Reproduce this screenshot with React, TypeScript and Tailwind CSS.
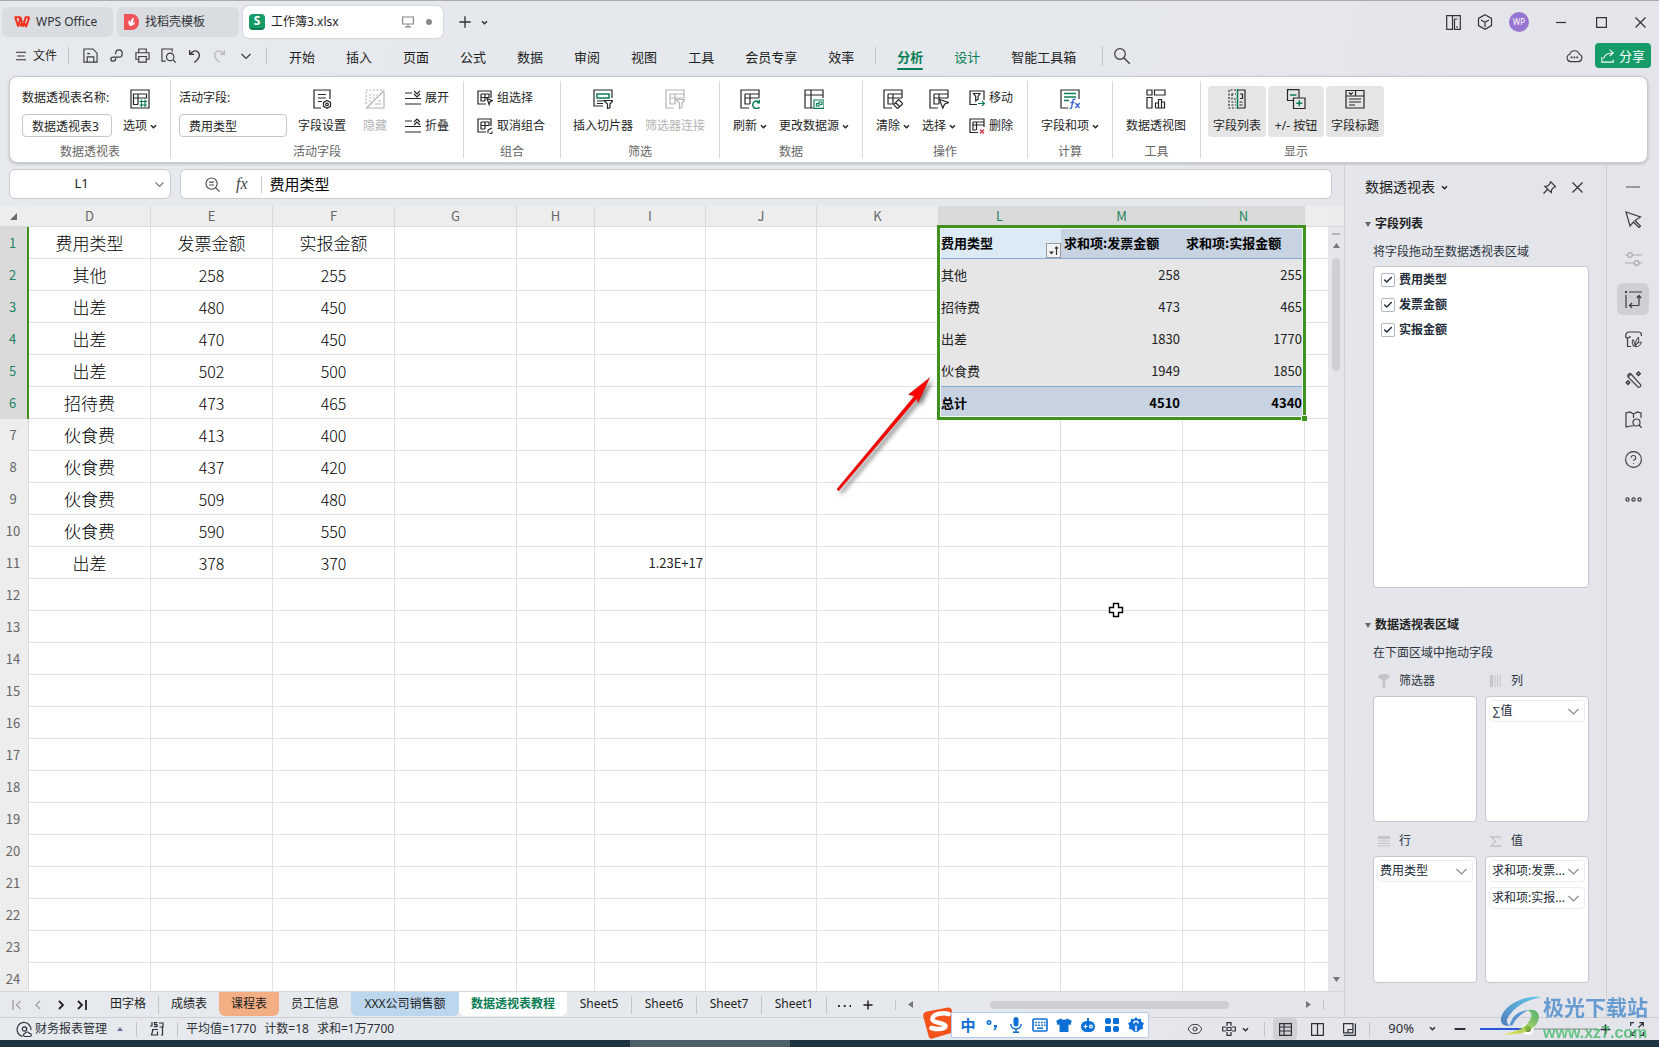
import React, { useState } from 'react';
import { Check, Plus, Minus, Eye, CircleHelp } from 'lucide-react';

type Kids = { children?: React.ReactNode };

function Svg({ size = 20, box = 20, className = '', children }: Kids & { size?: number; box?: number; className?: string }) {
  return (
    <svg width={size} height={size} viewBox={`0 0 ${box} ${box}`} fill="none" stroke="currentColor" strokeWidth="1.2" className={`shrink-0 ${className}`} aria-hidden="true">
      {children}
    </svg>
  );
}

function Caret({ className = '' }: { className?: string }) {
  return (
    <Svg size={7} box={7} className={className}>
      <path d="M1 2.2 3.5 4.7 6 2.2" strokeWidth="1.5" />
    </Svg>
  );
}

/* ---------- ribbon icons ---------- */
const G = '#0a7d55';
const tableFrame = <path d="M9 19H1V1h18v8M5 5h14M5 5v10h5M5 9h14M10 5v10" />;

const OptionsIcon = () => (
  <Svg>
    <path d="M1 1h18v18H1zM3.500 5h13v4h-13zM3.500 9v6.500H8M8 5v10.500" />
    <path stroke={G} d="M11.500 10.500v7.500M15 10.500v7.500M9.500 12.500h7.500M9.500 16H17" />
  </Svg>
);
const FieldSettingIcon = () => (
  <Svg>
    <path d="M9 19H2V1h16v9M6 5.500h8M6 9h8M6 12.500h4" />
    <path d="m15 11.500 3.500 1.900v3.900L15 19.300l-3.500-2v-3.900z" />
    <circle cx="15" cy="15.400" r="1.300" />
  </Svg>
);
const HideIcon = () => (
  <Svg>
    <path strokeDasharray="2 1.500" d="M1 15V1h18M4 6h8M4 9h6M4 12h3" />
    <path d="M19.500 1 1 19.500M1 19h18V3M10 15h6M13 12h3" />
  </Svg>
);
const ExpandIcon = () => (
  <Svg size={16} box={16}>
    <path d="M0 3h7M0 8.500h16M0 14h16M9 1l3 3 3-3M9 4l3 3 3-3" />
  </Svg>
);
const CollapseIcon = () => (
  <Svg size={16} box={16}>
    <path d="M0 3h7M0 8.500h16M0 14h16M9 4l3-3 3 3M9 7l3-3 3 3" />
  </Svg>
);
const GroupIcon = ({ un = false }: { un?: boolean }) => (
  <Svg size={16} box={16}>
    <path d="M9 14H1V1h13v7M4 4h8v4M4 4v7h4M4 7.500h8M8 4v7" />
    {un ? <path d="M11 15v-3M11 12l4-2M12.500 15.500H15M15 13.500v2" /> : <path d="m10 8.500 5.300 2.200-2.300 1-.9 2.800z" />}
  </Svg>
);
const SlicerIcon = () => (
  <Svg>
    <path d="M10 17H1V1h18v8M4 12h6M4 14.500h6" />
    <path stroke={G} strokeWidth="1.500" d="M4 5h12v4H4z" />
    <path d="M11 11.500h9l-3 3.500v3.500l-2.500 1.200V15z" />
  </Svg>
);
const ConnIcon = () => (
  <Svg>
    {tableFrame}
    <path className="fill-white" d="M11 10.500h9l-3 3.500v4l-2.500 1.500V14z" />
  </Svg>
);
const RefreshIcon = () => (
  <Svg>
    {tableFrame}
    <path className="fill-white stroke-white" d="M12 11h8v9h-8z" />
    <path stroke={G} strokeWidth="1.500" d="M19.500 18.200a3.800 3.800 0 1 1-.2-5M19.800 10.800v3h-3" />
  </Svg>
);
const SourceIcon = () => (
  <Svg>
    <path d="M9 19H1V1h18v8M1 6h18M7 1v18" />
    <path stroke={G} d="M10 11h10v8.400H10zM12.500 17v-2.500h2.500V17zM15 14.500V13h3v2.500h-2" />
  </Svg>
);
const ClearIcon = () => (
  <Svg>
    {tableFrame}
    <path className="fill-white" d="m15.500 10.500 4.200 4.200-4.500 4.500H14l-3.200-3.600zM12.500 13.500l4 4" />
  </Svg>
);
const SelectIcon = () => (
  <Svg>
    {tableFrame}
    <path className="fill-white" d="m10.500 10.500 9 3-4 1.700-1.700 4z" />
  </Svg>
);
const MoveIcon = () => (
  <Svg size={16} box={16}>
    <path d="M8 14.500H1V1h14v9M4.500 3.500h6.500L9 6.500v3L6.700 11V6.500z" />
    <path stroke={G} d="M9 13.500h6.500M13 11l2.500 2.500L13 16" />
  </Svg>
);
const DeleteIcon = () => (
  <Svg size={16} box={16}>
    <path d="M9 14.500H1V1h14v8M4 4h11M4 4v8h3M4 7h11M7.500 4v8" />
    <path stroke="#d1304a" d="m11 11.500 4 4M15 11.500l-4 4" />
  </Svg>
);
const FieldItemIcon = () => (
  <Svg>
    <path d="M8 19H1V1h18v9" />
    <path stroke={G} strokeWidth="1.500" d="M4 4.500h12M4 8h12M4 11.500h5" />
    <path stroke="#3a62d8" strokeWidth="1.300" d="M15.500 10.500c-1.800-.8-2.500.4-2.800 1.900l-1 5.500c-.3 1.500-1 2-2.200 1.500M10.500 13.500h4M15.500 14l4 5M19.800 14l-4.600 5" />
  </Svg>
);
const PivotChartIcon = () => (
  <Svg>
    <path d="M1 1h5v5H1zM8.500 1H19v5H8.500zM1 8.500h5V19H1zM9.500 19v-5h3v5M12.500 19V10.500h3V19M15.500 13h3v6h-9" />
  </Svg>
);
const FieldListIcon = () => (
  <Svg>
    <path strokeDasharray="2 1.500" d="M9 1H2v18h7M4.500 5H9M5 5v5h4M4.500 13H9M4.500 16H9" />
    <path d="M11 1h7v18h-7M13 5h2.500v4.500H13M12.500 13h3M12.500 16h3" />
    <path stroke={G} strokeWidth="1.500" d="M10.500 0v20" />
  </Svg>
);
const PlusMinusIcon = () => (
  <Svg>
    <path d="M7 11.500H1.500V.700H13v8M7.500 9h11.500v10.500H7.500z" />
    <path stroke={G} strokeWidth="1.500" d="M4 6h6.500M10.300 14.300h6M13.300 11.300v6" />
  </Svg>
);
const FieldTitleIcon = () => (
  <Svg>
    <path d="M1 1.500h18v17.500H1zM1 7h18M10.500 1.500V7M4 3.500l1.800 1.800L7.800 3.500M4 10h12M4 13h12M4 16h6" />
  </Svg>
);

/* ---------- ribbon building blocks ---------- */
function Group({ label, className, children }: Kids & { label: string; className: string }) {
  return (
    <section aria-label={label} className={`my-1 flex shrink-0 flex-col border-r border-[#d5d6d8] pt-[5px] last:border-r-0 ${className}`}>
      <div className="flex h-[51px]">{children}</div>
      <div className="mt-[7px] text-center leading-4 text-[#666]">{label}</div>
    </section>
  );
}
function BigButton({ icon, text, caret, disabled, className = '' }: { icon: React.ReactNode; text: string; caret?: boolean; disabled?: boolean; className?: string }) {
  return (
    <button disabled={disabled} className={`flex h-[51px] shrink-0 flex-col items-center gap-[9px] rounded pt-[3px] whitespace-nowrap ${disabled ? 'text-[#b4b4b4]' : 'text-[#262626]'} ${className}`}>
      {icon}
      <span className="flex items-center gap-[3px] leading-4">
        {text}
        {caret && <Caret />}
      </span>
    </button>
  );
}
function SmallButton({ icon, text }: { icon: React.ReactNode; text: string }) {
  return (
    <button className="flex h-[23px] items-center gap-1 leading-4 whitespace-nowrap">
      {icon}
      {text}
    </button>
  );
}
const Stack = ({ children, className = '' }: Kids & { className?: string }) => <div className={`flex shrink-0 flex-col gap-[5px] ${className}`}>{children}</div>;

function Ribbon() {
  return (
    <div className="mr-[11px] ml-[9px] flex h-[87px] shrink-0 overflow-hidden rounded-lg border border-[#c9cbd0] bg-white text-xs text-[#262626] shadow-[0_1px_3px_rgba(0,0,0,0.2)]">
      <Group label="数据透视表" className="w-[161px]">
        <Stack className="ml-3 w-[90px]">
          <label htmlFor="pvname" className="h-[23px] leading-6 whitespace-nowrap">数据透视表名称:</label>
          <input id="pvname" defaultValue="数据透视表3" className="h-6 w-full rounded border border-[#c4c6ca] px-[9px] leading-4" />
        </Stack>
        <BigButton icon={<OptionsIcon />} text="选项" caret className="ml-2.5 w-[36px]" />
      </Group>
      <Group label="活动字段" className="w-[293px]">
        <Stack className="ml-2 w-[108px]">
          <label htmlFor="actfield" className="h-[23px] leading-6">活动字段:</label>
          <input id="actfield" defaultValue="费用类型" className="h-6 w-full rounded border border-[#c4c6ca] px-[9px] leading-4" />
        </Stack>
        <BigButton icon={<FieldSettingIcon />} text="字段设置" className="ml-[7px] w-[56px]" />
        <BigButton icon={<HideIcon />} text="隐藏" disabled className="ml-2 w-[34px]" />
        <Stack className="ml-[13px]">
          <SmallButton icon={<ExpandIcon />} text="展开" />
          <SmallButton icon={<CollapseIcon />} text="折叠" />
        </Stack>
      </Group>
      <Group label="组合" className="w-[97px]">
        <Stack className="ml-[13px]">
          <SmallButton icon={<GroupIcon />} text="组选择" />
          <SmallButton icon={<GroupIcon un />} text="取消组合" />
        </Stack>
      </Group>
      <Group label="筛选" className="w-[159px]">
        <BigButton icon={<SlicerIcon />} text="插入切片器" className="ml-[11px] w-[62px]" />
        <BigButton icon={<ConnIcon />} text="筛选器连接" disabled className="ml-2.5 w-[62px]" />
      </Group>
      <Group label="数据" className="w-[143px]">
        <BigButton icon={<RefreshIcon />} text="刷新" caret className="ml-3 w-[36px]" />
        <BigButton icon={<SourceIcon />} text="更改数据源" caret className="ml-2.5 w-[72px]" />
      </Group>
      <Group label="操作" className="w-[165px]">
        <BigButton icon={<ClearIcon />} text="清除" caret className="ml-3 w-[36px]" />
        <BigButton icon={<SelectIcon />} text="选择" caret className="ml-2.5 w-[36px]" />
        <Stack className="ml-3">
          <SmallButton icon={<MoveIcon />} text="移动" />
          <SmallButton icon={<DeleteIcon />} text="删除" />
        </Stack>
      </Group>
      <Group label="计算" className="w-[85px]">
        <BigButton icon={<FieldItemIcon />} text="字段和项" caret className="ml-3 w-[60px]" />
      </Group>
      <Group label="工具" className="w-[88px]">
        <BigButton icon={<PivotChartIcon />} text="数据透视图" className="ml-3 w-[62px]" />
      </Group>
      <Group label="显示" className="px-[7px]">
        <div className="flex gap-0.5">
          <BigButton icon={<FieldListIcon />} text="字段列表" className="w-[58px] bg-[#e5e5e5]" />
          <BigButton icon={<PlusMinusIcon />} text="+/- 按钮" className="w-[56px] bg-[#e5e5e5]" />
          <BigButton icon={<FieldTitleIcon />} text="字段标题" className="w-[58px] bg-[#e5e5e5]" />
        </div>
      </Group>
    </div>
  );
}

/* ---------- title bar and menu ---------- */
function TitleBar() {
  return (
    <header className="flex h-[38px] shrink-0 items-end justify-between border-t border-[#a9abae]">
      <div className="flex items-center text-[#2f3237]">
        <button className="ml-0.5 flex h-[30px] w-[111px] items-center gap-1.5 rounded-md bg-[#d9dce0] pl-3">
          <svg width="16" height="12" viewBox="0 0 16 12" fill="none" stroke="#f2321f" strokeWidth="2" aria-hidden="true">
            <path d="M.500 1.200h6L4.200 10.500 1.300 1.500M6.500 1.200 9 10.500l2.600-9.300M8 5.500l-1.500 5M11 1.200h4.300L12 10.800 9.800 5" strokeLinejoin="bevel" />
          </svg>
          WPS Office
        </button>
        <button className="ml-1 flex h-[30px] w-[122px] items-center gap-1.5 rounded-md bg-[#d9dce0] pl-[7px]">
          <svg width="15" height="16" viewBox="0 0 15 16" aria-hidden="true">
            <path d="M0 0h8a7 8 0 0 1 0 16H0z" fill="#ef5558" />
            <path d="M6 12c-2-2-2-4-1-6 1 1 1.500 2 1.500 3C6.500 6 8 4.500 9.500 3.500c.5 2 0 4.500-1.500 6 .8-.8 1.800-1.200 3-1-.5 2-2.500 3.500-5 3.500z" fill="#fff" />
          </svg>
          找稻壳模板
        </button>
        <button className="ml-1 flex h-8 w-[200px] items-center rounded-md bg-white pl-1.5 text-[#222] shadow-[0_0_2px_rgba(0,0,0,0.25)]">
          <span className="flex h-4 w-4 items-center justify-center rounded-sm border-b-2 border-[#0b7a4e] bg-[#149b66] text-xs leading-3 font-bold text-white">S</span>
          <span className="ml-1.5">工作簿3.xlsx</span>
          <Svg size={12} box={12} className="ml-auto text-[#888]">
            <path d="M.600 1h10.800v7H.600zM3 10.800h6M6 8v2.800" />
          </Svg>
          <span className="mr-[11px] ml-3 h-1.5 w-1.5 rounded-full bg-[#8a8a8a]" />
        </button>
        <button aria-label="新建标签" className="ml-[13px]"><Plus size={18} strokeWidth={1.8} /></button>
        <button aria-label="标签列表" className="ml-[7px]"><Caret /></button>
      </div>
      <div className="flex items-center pb-1.5 text-[#333]">
        <button aria-label="分屏" className="flex w-8 justify-center">
          <Svg size={15} box={15}><path d="M.700.700h5.800v13.600H.700zM6.500.700h7.800v13.600H8.500V4M8.500 4h3M10 12h2" /></Svg>
        </button>
        <button aria-label="应用" className="flex w-8 justify-center">
          <Svg size={16} box={16}><path d="m8 .800 6.500 3.600v7.200L8 15.200l-6.500-3.600V4.400zM4 6l4 2.300L12 6M8 8.300V13" /></Svg>
        </button>
        <button aria-label="账户" className="mx-2 h-5 w-5 rounded-full bg-[#9775d2] text-center text-[8px] leading-5 text-white">WP</button>
        <button aria-label="最小化" className="ml-1 flex w-10 justify-center"><Svg size={10} box={10}><path d="M0 5.500h10" /></Svg></button>
        <button aria-label="最大化" className="flex w-10 justify-center"><Svg size={11} box={11}><path d="M.600.600h9.800v9.800H.600z" /></Svg></button>
        <button aria-label="关闭" className="flex w-[38px] justify-center"><Svg size={11} box={11}><path d="m.500.500 10 10M10.500.500l-10 10" /></Svg></button>
      </div>
    </header>
  );
}

const menuA = ['开始', '插入', '页面', '公式', '数据', '审阅', '视图', '工具', '会员专享', '效率'];
const Bar = ({ className = '' }: { className?: string }) => <span className={`w-px shrink-0 bg-[#c3c5c9] ${className}`} />;

function MenuBar() {
  const q = 'flex w-[26px] shrink-0 justify-center';
  return (
    <nav className="flex h-[38px] shrink-0 items-center pb-[3px] text-[#3a3c40]">
      <button className="ml-4 flex items-center gap-[7px] text-[#2a2a2a]">
        <Svg size={10} box={12}><path d="M0 1.500h12M1.500 6h9M0 10.500h12" /></Svg>
        <span className="leading-4">文件</span>
      </button>
      <Bar className="mr-2 ml-[11px] h-[17px]" />
      <button aria-label="保存" className={q}><Svg size={15} box={16}><path d="M1 1h9.500L15 5.500V15H1zM4.500 15V9.500h7V15M4.500 6h3" /></Svg></button>
      <button aria-label="链接" className={q}><Svg size={13} box={16}><path strokeWidth="1.500" d="M7 11c0 2.500-1.500 4-3.300 4S1 13.800 1 12.500 2 10 4 10h7c2.500 0 4-1.800 4-4.300S13.500 1 11 1 7 3 7 5v1.500" /></Svg></button>
      <button aria-label="打印" className={q}><Svg size={15} box={16}><path d="M4 5V1h8v4M4 12H1V5h14v7h-3M4 9h8v6H4z" /></Svg></button>
      <button aria-label="打印预览" className={q}><Svg size={15} box={16}><path d="M5 14H1V1h11v3" /><circle cx="9.800" cy="9.500" r="4" /><path d="m12.600 12.500 3 3" /></Svg></button>
      <button aria-label="撤销" className={q}><Svg size={14} box={16}><path strokeWidth="1.500" d="M3 1v5h5M3.500 5.500C6 2.500 10 1 12.500 3.500s2 5.500-.5 8.500L8.500 15.500" /></Svg></button>
      <button aria-label="恢复" className={`${q} text-[#b9bbbf]`}><Svg size={14} box={16}><path strokeWidth="1.500" d="M13 1v5H8M12.500 5.500C10 2.500 6 1 3.500 3.500S1.500 9 4 12l3.500 3.500" /></Svg></button>
      <button aria-label="更多" className={q}><Svg size={10} box={10}><path d="m.500 3 4.500 4.500L9.500 3" /></Svg></button>
      <Bar className="ml-[7px] h-[17px]" />
      <div className="ml-[22px] flex items-center gap-[31px] pt-0.5 text-[13px] whitespace-nowrap text-[#222]">
        {menuA.map((m) => (
          <button key={m} className="leading-5">{m}</button>
        ))}
      </div>
      <Bar className="ml-[21px] h-[17px]" />
      <div className="ml-[21px] flex items-center gap-[31px] pt-0.5 text-[13px] whitespace-nowrap">
        <button className="relative leading-5 font-bold text-[#0a7d55] after:absolute after:inset-x-0 after:-bottom-[3px] after:h-0.5 after:rounded after:bg-[#0a7d55]">分析</button>
        <button className="leading-5 text-[#0a7d55]">设计</button>
        <button className="leading-5 text-[#222]">智能工具箱</button>
      </div>
      <Bar className="ml-[26px] h-5" />
      <button aria-label="搜索" className="ml-[11px]">
        <Svg size={16} box={16}><circle cx="6" cy="6" r="5.300" /><path d="m9.800 9.800 6 6" strokeWidth="1.300" /></Svg>
      </button>
      <button aria-label="云服务" className="ml-auto">
        <Svg size={17} box={18}><path d="M5 15.500a4 4 0 0 1-1-7.800 5.200 5.200 0 0 1 10 0 4 4 0 0 1-1 7.800z" /><path strokeWidth="1.800" strokeDasharray="1.800 1.200" d="M5 11h8.500" /></Svg>
      </button>
      <button className="mr-2 ml-3 flex h-[25px] w-14 items-center justify-center gap-1 rounded bg-[#149b68] text-[13px] leading-4 text-white">
        <Svg size={14} box={16}><path d="M1 9v6h13v-3M3 11c1-4.500 4-6.500 10-6.500M10 1l4 3.500L10 8" /></Svg>
        分享
      </button>
    </nav>
  );
}

function FormulaBar() {
  return (
    <div className="flex h-[43px] shrink-0 gap-[9px] pt-1.5 pr-3 pl-[9px]">
      <div className="flex h-[30px] w-[162px] items-center rounded-md border border-[#c9cbce] bg-white pr-1.5">
        <input aria-label="名称框" defaultValue="L1" className="w-full min-w-0 pr-2.5 pl-2 text-center text-[13px] text-[#222]" />
        <button aria-label="名称列表" className="text-[#777]"><Svg size={9} box={9}><path d="m.500 2.500 4 4 4-4" /></Svg></button>
      </div>
      <div className="flex h-[30px] flex-1 items-center rounded-md border border-[#c9cbce] bg-white pl-6 text-[#444]">
        <Svg size={15} box={16}><circle cx="7" cy="7" r="6" /><path d="m11.500 11.500 4 4M4.500 5.500h5M4.500 8.500h5" /></Svg>
        <span className="ml-4 font-['Liberation_Serif'] text-base italic">fx</span>
        <Bar className="ml-[13px] h-[17px]" />
        <input aria-label="编辑栏" defaultValue="费用类型" className="ml-2 min-w-0 flex-1 text-[15px] text-black" />
      </div>
    </div>
  );
}

/* ---------- sheet grid ---------- */
const columns = ['D', 'E', 'F', 'G', 'H', 'I', 'J', 'K', 'L', 'M', 'N'];
const source: string[][] = [
  ['费用类型', '发票金额', '实报金额'],
  ['其他', '258', '255'],
  ['出差', '480', '450'],
  ['出差', '470', '450'],
  ['出差', '502', '500'],
  ['招待费', '473', '465'],
  ['伙食费', '413', '400'],
  ['伙食费', '437', '420'],
  ['伙食费', '509', '480'],
  ['伙食费', '590', '550'],
  ['出差', '378', '370'],
];
const pivot: string[][] = [
  ['费用类型', '求和项:发票金额', '求和项:实报金额'],
  ['其他', '258', '255'],
  ['招待费', '473', '465'],
  ['出差', '1830', '1770'],
  ['伙食费', '1949', '1850'],
  ['总计', '4510', '4340'],
];

function pivotClass(r: number, c: number) {
  const line = r === 0 || r === 4 ? 'border-b border-[#86aad2] ' : '';
  const fill = r === 0 && c === 0 ? 'bg-[#dceaf6] ' : r === 0 || r === 5 ? 'bg-[#c7d3e0] ' : 'bg-[#e6e6e6] ';
  const weight = r === 0 || r === 5 ? 'font-bold text-black ' : 'text-[#222] ';
  const align = r > 0 && c > 0 ? 'text-right ' : 'text-left ';
  return line + fill + weight + align + (c === 0 ? 'pl-0.5 pr-[3px]' : 'pl-[3px] pr-[3px]');
}

function Grid() {
  return (
    <div className="relative min-h-0 flex-1 overflow-hidden bg-white font-['Noto_Sans_CJK_SC',sans-serif]">
      <table className="w-full table-fixed border-separate border-spacing-0">
        <colgroup>
          <col className="w-[29px]" />
          <col className="w-[122px]" />
          <col className="w-[122px]" />
          <col className="w-[122px]" />
          <col className="w-[122px]" />
          <col className="w-[78px]" />
          <col className="w-[111px]" />
          <col className="w-[111px]" />
          <col className="w-[122px]" />
          <col className="w-[122px]" />
          <col className="w-[122px]" />
          <col className="w-[122px]" />
          <col />
        </colgroup>
        <thead>
          <tr className="h-[21px] text-[13px] leading-5 text-[#666]">
            <td className="border-b border-[#d9d9d9] bg-[#ededed] p-0">
              <svg width="7" height="7" viewBox="0 0 7 7" className="ml-2.5" aria-hidden="true"><path d="M7 0v7H0z" fill="#6b6b6b" /></svg>
            </td>
            {columns.map((c, i) => (
              <th key={c} scope="col" className={`border-r border-b border-[#d9d9d9] p-0 font-normal ${i > 7 ? 'bg-[#dadada] text-[#1d8560]' : 'bg-[#ededed]'}`}>{c}</th>
            ))}
            <td className="border-b border-[#d9d9d9] bg-[#ededed]" />
          </tr>
        </thead>
        <tbody>
          {Array.from({ length: 24 }, (_, r) => (
            <tr key={r} className="h-8">
              <th scope="row" className={`p-0 pr-0.5 text-center text-[13px] leading-5 font-normal ${r < 6 ? 'border-r-2 border-[#3f921c] bg-[#dadada] text-[#1d8560]' : 'border-r border-[#d9d9d9] bg-[#ededed] text-[#666]'}`}>{r + 1}</th>
              {columns.map((c, i) => {
                if (i > 7 && r < 6) {
                  return (
                    <td key={c} className={`relative py-0 text-[13px] leading-5 whitespace-nowrap ${pivotClass(r, i - 8)}`}>
                      {pivot[r][i - 8]}
                      {r === 0 && i === 8 && (
                        <button aria-label="筛选" className="absolute right-0 bottom-0 h-[15px] w-[15px] border border-[#9a9a9a] bg-[#f2f3f5] text-[#333]">
                          <Svg size={13} box={13}><path d="M9.500 11V3M8 4.500 9.500 3 11 4.500" /><path d="M2 7.500h5L4.500 10.500z" fill="currentColor" stroke="none" /></Svg>
                        </button>
                      )}
                    </td>
                  );
                }
                return (
                  <td key={c} className={`border-r border-b border-[#e1e1e1] p-0 ${i < 3 ? 'text-center text-[17px] leading-6 font-light text-black' : 'pr-0.5 text-right text-[13px] leading-5 text-[#222]'}`}>
                    {i < 3 && source[r] ? (i > 0 && r > 0 ? <span className="text-base">{source[r][i]}</span> : source[r][i]) : c === 'I' && r === 10 ? '1.23E+17' : ''}
                  </td>
                );
              })}
              <td className="border-b border-[#e1e1e1]" />
            </tr>
          ))}
        </tbody>
      </table>
      <div className="pointer-events-none absolute top-[19px] left-[937px] h-[195px] w-[369px] border-3 border-[#3f921c] shadow-[inset_0_0_0_1px_#eef4f8]">
        <span className="absolute -right-1 -bottom-1 h-1.5 w-1.5 border-t border-l border-white bg-[#3f921c]" />
      </div>
      <svg className="pointer-events-none absolute top-[165px] left-[830px]" width="110" height="130" viewBox="0 0 110 130" aria-hidden="true">
        <defs>
          <filter id="arrowShadow" x="-20%" y="-20%" width="140%" height="140%">
            <feDropShadow dx="3" dy="3" stdDeviation="2" floodColor="#000" floodOpacity="0.5" />
          </filter>
        </defs>
        <g filter="url(#arrowShadow)" stroke="#a01010" strokeWidth=".4">
          <path d="M99.700 6.700 78.500 23.500l6 1.500L7 118l1.500 2L87 27.500l1 4z" fill="#fe0000" />
        </g>
      </svg>
      <svg className="pointer-events-none absolute top-[396px] left-[1108px]" width="16" height="16" viewBox="0 0 16 16" aria-hidden="true">
        <path d="M5.500 1.500h5v4h4v5h-4v4h-5v-4h-4v-5h4z" fill="#fff" stroke="#000" strokeWidth="1.400" />
      </svg>
    </div>
  );
}

function VScroll() {
  return (
    <div className="flex w-4 shrink-0 flex-col items-center">
      <div className="h-[21px] w-full border-b border-[#d4d6d9] bg-[#eaebec]" />
      <div className="mt-1.5 h-0.5 w-2 bg-[#b5b7ba]" />
      <svg width="7" height="5" viewBox="0 0 7 5" className="mt-2" aria-hidden="true"><path d="M3.500 0 7 5H0z" fill="#777" /></svg>
      <div className="mt-2.5 h-[113px] w-2 rounded-full bg-[#ced0d3]" />
      <svg width="7" height="5" viewBox="0 0 7 5" className="mt-auto mb-[9px]" aria-hidden="true"><path d="M0 0h7L3.500 5z" fill="#777" /></svg>
    </div>
  );
}

function SheetTabs() {
  const tab = 'flex h-6 shrink-0 items-center whitespace-nowrap';
  return (
    <div className="flex h-[26px] shrink-0 items-start border-t border-[#d4d6d9] text-[#222]">
      <div className="flex h-[25px] w-[98px] shrink-0 items-center pl-3 text-[#a5a7aa]">
        <button aria-label="第一张"><Svg size={10} box={10}><path strokeWidth="1.500" d="M1 0v10M8.500 1l-4 4 4 4" /></Svg></button>
        <button aria-label="上一张" className="ml-[11px]"><Svg size={10} box={10}><path strokeWidth="1.500" d="M7 1 3 5l4 4" /></Svg></button>
        <button aria-label="下一张" className="ml-[13px] text-[#222]"><Svg size={10} box={10}><path strokeWidth="1.800" d="m3 1 4 4-4 4" /></Svg></button>
        <button aria-label="最后一张" className="ml-[11px] text-[#222]"><Svg size={10} box={10}><path strokeWidth="1.800" d="m1 1 4 4-4 4M9 0v10" /></Svg></button>
      </div>
      <button className={`${tab} px-3`}>田字格</button>
      <Bar className="mt-1 h-[18px]" />
      <button className={`${tab} px-3`}>成绩表</button>
      <button className={`${tab} rounded-b-md bg-[#f4ae83] px-3`}>课程表</button>
      <button className={`${tab} px-3`}>员工信息</button>
      <button className={`${tab} w-[108px] justify-center rounded-b-md bg-[#bcd6ee]`}>XXX公司销售额</button>
      <button className={`${tab} w-[108px] justify-center rounded-b-md bg-white font-bold text-[#0a7d55]`}>数据透视表教程</button>
      {['Sheet5', 'Sheet6', 'Sheet7', 'Sheet1'].map((s) => (
        <React.Fragment key={s}>
          <button className={`${tab} w-16 justify-center`}>{s}</button>
          <Bar className="mt-1 h-[18px]" />
        </React.Fragment>
      ))}
      <div className="flex h-[25px] min-w-0 flex-1 items-center pl-2.5">
        <button aria-label="更多工作表"><Svg size={14} box={14}><path strokeWidth="1.800" strokeDasharray="1.800 4" d="M1 8h13" /></Svg></button>
        <button aria-label="新建工作表" className="ml-2.5"><Plus size={14} strokeWidth={2.5} /></button>
        <Bar className="ml-5 h-2.5" />
        <svg width="5" height="7" viewBox="0 0 5 7" className="ml-3" aria-hidden="true"><path d="M5 0v7L0 3.500z" fill="#777" /></svg>
        <div className="flex min-w-0 flex-1 px-[77px]"><div className="h-2 w-full max-w-[241px] rounded-full bg-[#cdcfd1]" /></div>
        <svg width="5" height="7" viewBox="0 0 5 7" aria-hidden="true"><path d="M0 0v7l5-3.500z" fill="#777" /></svg>
        <Bar className="mr-5 ml-3 h-2.5" />
      </div>
    </div>
  );
}

/* ---------- pivot panel ---------- */
function SectionTitle({ children, className = '' }: Kids & { className?: string }) {
  return (
    <h3 className={`flex items-center gap-1 leading-5 font-bold text-[#222] ${className}`}>
      <svg width="6" height="5" viewBox="0 0 6 5" aria-hidden="true"><path d="M0 0h6L3 5z" fill="#666" /></svg>
      {children}
    </h3>
  );
}
function Area({ icon, label, items, className = '' }: { icon: React.ReactNode; label: string; items: React.ReactNode[]; className?: string }) {
  return (
    <div>
      <div className="flex h-[30px] items-center text-[#c3c5c9]">
        <span className="flex w-[26px] pl-[5px]">{icon}</span>
        <span className="text-[#2b3440]">{label}</span>
      </div>
      <div className={`rounded border border-[#c4c6ca] bg-white p-[3px] ${className}`}>
        {items.map((it, i) => (
          <button key={i} className="mb-[5px] flex h-[22px] w-full items-center justify-between rounded border border-[#ececf1] pr-[5px] pl-0.5 text-[#222b38]">
            <span className="whitespace-nowrap">{it}</span>
            <Svg size={11} box={11} className="text-[#8a8c90]"><path d="m.500 3 5 5 5-5" /></Svg>
          </button>
        ))}
      </div>
    </div>
  );
}
function PivotPanel() {
  const [on, setOn] = useState([true, true, true]);
  return (
    <aside className="w-[262px] shrink-0 border-l border-[#cdcfd3] pr-[17px] pl-5">
      <div className="flex h-12 items-center">
        <h2 className="flex items-center gap-1.5 text-sm text-[#222]">数据透视表 <Caret /></h2>
        <button aria-label="固定" className="ml-auto text-[#333]">
          <Svg size={13} box={13}><path d="m7.500.700 5 5-1.500.5-2.300 2.400-.5 3-6.300-6.200 3-.5 2.300-2.600zM4.500 8.500.500 12.500" /></Svg>
        </button>
        <button aria-label="关闭面板" className="mr-1.5 ml-4 text-[#333]"><Svg size={11} box={11}><path d="m.500.500 10 10M10.500.500l-10 10" /></Svg></button>
      </div>
      <SectionTitle className="mt-[3px]">字段列表</SectionTitle>
      <p className="mt-2 ml-2 leading-5 text-[#2b3440]">将字段拖动至数据透视表区域</p>
      <ul className="mt-1 ml-2 flex h-[322px] flex-col gap-[5px] rounded border border-[#c4c6ca] bg-white px-[7px] py-[3px]">
        {['费用类型', '发票金额', '实报金额'].map((f, i) => (
          <li key={f}>
            <label className="flex h-5 items-center gap-1 font-bold text-[#222b38]">
              <span className="relative flex h-3.5 w-3.5">
                <input type="checkbox" checked={on[i]} onChange={() => setOn(on.map((v, j) => (j === i ? !v : v)))} className="h-3.5 w-3.5 appearance-none rounded-xs border border-[#b4b8bf] bg-white" />
                {on[i] && <Check size={10} strokeWidth={3.5} className="pointer-events-none absolute top-0.5 left-0.5" />}
              </span>
              {f}
            </label>
          </li>
        ))}
      </ul>
      <SectionTitle className="mt-[27px]">数据透视表区域</SectionTitle>
      <p className="mt-2 ml-2 leading-5 text-[#2b3440]">在下面区域中拖动字段</p>
      <div className="mt-[3px] ml-2 grid grid-cols-2 gap-x-2 gap-y-1">
        <Area label="筛选器" items={[]} className="h-[126px]" icon={<svg width="12" height="14" viewBox="0 0 12 14" fill="currentColor" aria-hidden="true"><path d="M0 2.500C0 1 3 0 6 0s6 1 6 2.500S9 5 7.500 6v7.500L4.500 14V6C3 5 0 4.500 0 2.500z" /></svg>} />
        <Area label="列" items={[<><span className="font-['Liberation_Sans']">∑</span>值</>]} className="h-[126px]" icon={<svg width="11" height="12" viewBox="0 0 11 12" fill="currentColor" aria-hidden="true"><path d="M0 0h3v12H0zM4.500 0h1v12h-1zM7 0h1v12H7zM9.500 0h1v12h-1z" /></svg>} />
        <Area label="行" items={['费用类型']} className="h-[127px]" icon={<svg width="12" height="11" viewBox="0 0 12 11" fill="currentColor" aria-hidden="true"><path d="M0 0h12v3H0zM0 4.500h12v1H0zM0 7h12v1H0zM0 9.500h12v1H0z" /></svg>} />
        <Area label="值" items={['求和项:发票...', '求和项:实报...']} className="h-[127px]" icon={<Svg size={11} box={11}><path strokeWidth="1.400" d="M10 2.500V.700H1l4.500 4.800L1 10.300h9V8.500" /></Svg>} />
      </div>
    </aside>
  );
}

function SideBar() {
  const b = 'flex h-8 w-8 shrink-0 items-center justify-center rounded-md';
  return (
    <aside className="flex w-[53px] shrink-0 flex-col items-center gap-2 border-l border-[#cdcfd3] pt-4 text-[#3b3d41]">
      <button aria-label="折叠" className="flex h-4 w-8 items-center justify-center"><Svg size={14} box={14}><path stroke="#8e9094" strokeWidth="1.800" d="M0 7h14" /></Svg></button>
      <button aria-label="选择" className={b}><Svg size={17} box={17}><path d="m1 1 14.500 5-5.500 3.500 5.500 5.500-1.500 1.500L8.500 11 5 15z" /></Svg></button>
      <button aria-label="属性" className={`${b} text-[#a9abaf]`}><Svg size={17} box={17}><path d="M0 4h3M7 4h10M0 12h9.500M14 12h3" /><circle cx="5" cy="4" r="2.300" /><circle cx="11.700" cy="12" r="2.300" /></Svg></button>
      <button aria-label="透视表" className={`${b} bg-[#cfd0d4]`}><Svg size={17} box={17}><path d="M4 1h13M1 4v13M14 14.500V5M14 14.500H5M11.800 7 14 4.500 16.200 7M7 12l-2.500 2.500L7 17" /><path strokeWidth="2" d="M0 1h2" /></Svg></button>
      <button aria-label="模板" className={b}>
        <Svg size={17} box={17}>
          <path d="M2.500 7v8.500H6M.700 5.500C.700 2.500 2 1 4 1h9.500C15.500 1 16.500 3 16.500 5M.700 5.500c0 2 4.500 2 4.500-.5" />
          <path strokeWidth="1" d="M9 15.500C7 13.500 6.800 11 8 8.500c1.300 1.500 1.600 4 1 7zM10.500 14c0-3.500 1-6 3-8 .8 3.500-.3 6.500-3 8zM10 15.700c1.500-3 3.500-4.500 6.300-4.700-.3 3-2.800 5-6.300 4.700z" />
        </Svg>
      </button>
      <button aria-label="魔法棒" className={b}><Svg size={17} box={17}><path d="m6 3 9.500 10.500c1 1.500-1 3.500-2.500 2.500L3 5.800C2 4 4.500 1.500 6 3zM3 6l3-3" /><path d="m13.500.900 1.800 1.800-1.800 1.800-1.800-1.800zM3 9.800l1.800 1.800L3 13.400l-1.800-1.800z" strokeWidth="1.400" /></Svg></button>
      <button aria-label="查阅" className={b}><Svg size={17} box={17}><path d="M8.500 15H5.500L1 16V2l4-1 3.500 2L12.500 1 16 2v5M8.500 3v4" /><circle cx="11.500" cy="11.500" r="3.500" /><path d="m14 14 3 3" /></Svg></button>
      <button aria-label="帮助" className={b}><CircleHelp size={19} strokeWidth={1.400} /></button>
      <button aria-label="更多" className={b}><Svg size={17} box={17}><circle cx="2.500" cy="8.500" r="1.600" /><circle cx="8.500" cy="8.500" r="1.600" /><circle cx="14.500" cy="8.500" r="1.600" /></Svg></button>
    </aside>
  );
}

/* ---------- bottom ---------- */
function StatusBar() {
  return (
    <footer className="flex h-[23px] shrink-0 items-center border-t border-[#cdcfd3] text-[#2c3038]">
      <button className="ml-4 flex items-center gap-0.5 whitespace-nowrap">
        <Svg size={17} box={17}><path d="M6.500 15.300A7 7 0 1 1 15 9" /><circle cx="8.500" cy="8" r="2.200" /><path d="M9 15.500c-2 0-2-3 0-3 .5-2 4-2 4.500 0 2.500 0 2.500 3 0 3z" /></Svg>
        财务报表管理
        <svg width="6" height="4" viewBox="0 0 6 4" className="ml-2" aria-hidden="true"><path d="M3 0 6 4H0z" fill="#6a76a0" /></svg>
      </button>
      <Bar className="ml-[13px] h-[15px]" />
      <button aria-label="JS宏" className="ml-[13px]"><Svg size={14} box={14}><path d="M2 0v4H0M7.500.600H4.500v2h2.500v2H4M9 1h4v4H9.500M12.500 5v8H11M2 7.500h6M3 7.500 1.500 13h6V9.500" /></Svg></button>
      <Bar className="ml-[13px] h-[15px]" />
      <span className="ml-2 flex gap-2 whitespace-nowrap"><span>平均值=1770</span><span>计数=18</span><span>求和=1万7700</span></span>
      <div className="ml-auto flex items-center">
        <button aria-label="护眼模式"><Eye size={16} strokeWidth={1.400} /></button>
        <button aria-label="阅读布局" className="ml-[19px] flex items-center gap-1.5">
          <Svg size={14} box={14}><path d="M5 4V.700h4V4M5 10v3.300h4V10M4 5H.700v4H4M10 5h3.300v4H10M5 5.500h4v3H5z" /></Svg>
          <Caret />
        </button>
        <Bar className="ml-[15px] h-[15px]" />
        <button aria-label="普通视图" className="ml-2 flex h-[22px] w-6 items-center justify-center rounded-sm bg-[#cfd0d4]"><Svg size={13} box={13}><path d="M.600.600h11.800v11.800H.600zM.600 4h11.800M.600 8h11.800M5 .600v11.800" /></Svg></button>
        <button aria-label="分页预览" className="ml-3.5"><Svg size={13} box={13}><path d="M.600.600h11.800v11.800H.600zM6.500.600v11.800" /></Svg></button>
        <button aria-label="页面布局" className="ml-[19px]"><Svg size={13} box={13}><path d="M.600.600h9.300v9.300H.600zM12.400.600v11.800H.600M5 9.500V6.500h5" /></Svg></button>
        <Bar className="ml-[13px] h-[15px]" />
        <button className="ml-[18px] flex items-center gap-[15px] text-[13px]">90% <Caret /></button>
        <button aria-label="缩小" className="ml-4"><Minus size={16} strokeWidth={2.800} /></button>
        <input type="range" aria-label="缩放" min={10} max={210} defaultValue={90} className="ml-3 h-0.5 w-[118px] appearance-none bg-[linear-gradient(to_right,#2756dd_40%,#b5b7bb_40%)] [&::-webkit-slider-thumb]:h-3 [&::-webkit-slider-thumb]:w-3 [&::-webkit-slider-thumb]:appearance-none [&::-webkit-slider-thumb]:rounded-full [&::-webkit-slider-thumb]:border-3 [&::-webkit-slider-thumb]:border-white [&::-webkit-slider-thumb]:bg-[#5f7f3a]" />
        <button aria-label="放大"><Plus size={15} strokeWidth={2.500} /></button>
        <button aria-label="全屏" className="mr-[15px] ml-[17px]"><Svg size={14} box={14}><path d="M.700 4V.700H4M13.300 10v3.300H10M8.500 5.500 13 1M9.500.700h3.800v3.800M5.500 8.500 1 13M.700 9.500v3.800h3.800" /></Svg></button>
      </div>
    </footer>
  );
}

function ImeBar() {
  return (
    <div className="absolute bottom-[9px] left-[923px] flex h-[26px] items-center text-[#0b6fd6]">
      <svg width="32" height="32" viewBox="0 0 32 32" className="-mt-1" aria-hidden="true">
        <path d="M4 4.500 25 .500q3-.5 3.800 2.500L32 21.500q.5 3-2 4L9.500 31.500q-3 .8-3.800-2L.300 9.500Q-.5 5.500 4 4.500z" fill="#f4531c" />
        <path d="M25.500 7c-5-1.500-15-.5-16 4.500-1 5 13 4 13 7.500 0 3-8 4-14 2" fill="none" stroke="#fff" strokeWidth="4.500" strokeLinecap="round" />
      </svg>
      <div className="-ml-1 flex h-[26px] items-center rounded-r-xs border border-[#b4cdea] bg-white pl-1">
        <span className="w-6 text-center text-[15px] leading-5 font-bold">中</span>
        <span className="flex w-6 justify-center"><Svg size={14} box={14}><circle cx="4" cy="4.500" r="1.700" strokeWidth="1.600" /><path d="M9 7h3c0 3-1 4.500-3 5.500l-.5-1q1.500-.8 1.500-2H9z" fill="currentColor" stroke="none" /></Svg></span>
        <span className="flex w-6 justify-center"><Svg size={16} box={16}><rect x="5.500" y="0" width="5" height="9.500" rx="2.500" fill="currentColor" stroke="none" /><path strokeWidth="1.500" d="M2.800 7c0 6.500 10.400 6.500 10.400 0M8 12v3M5 15.200h6" /></Svg></span>
        <span className="flex w-6 justify-center"><Svg size={16} box={16}><rect x="1" y="2" width="14" height="12" rx="1" strokeWidth="1.600" /><path strokeWidth="1.600" strokeDasharray="1.800 1.200" d="M3 5.500h10.500M3 8.200h10.500" /><path strokeWidth="1.500" d="M5 11.200h6" /></Svg></span>
        <span className="flex w-6 justify-center"><Svg size={16} box={16}><path d="M5 1.500c1 1.800 5 1.800 6 0l4.800 2.300L14.500 8 12.500 7.500v7.500h-9V7.500L1.500 8 .200 3.800z" fill="currentColor" stroke="none" /></Svg></span>
        <span className="flex w-6 justify-center"><Svg size={16} box={16}><rect x="1" y="4" width="14" height="11" rx="5.500" fill="currentColor" stroke="none" /><path strokeWidth="2" d="M8 1v4" /><path stroke="#fff" d="M3.500 9.500h4M5.500 7.500v4" /><circle cx="11" cy="9.500" r="1.400" stroke="#fff" /></Svg></span>
        <span className="flex w-6 justify-center"><Svg size={14} box={14}><g fill="currentColor" stroke="none"><rect width="6" height="6" rx="2" /><rect x="8" width="6" height="6" rx="1" /><rect y="8" width="6" height="6" rx="1" /><rect x="8" y="8" width="6" height="6" rx="2" /></g></Svg></span>
        <span className="flex w-6 justify-center"><Svg size={16} box={16}><path d="m8 0 2 2.200 3-.6.2 3L16 6.500 14.500 9l.8 2.800-3 .6L10 14.800H6l-2.300-2.400-3-.6L1.500 9 0 6.500l2.800-1.900.2-3 3 .6z" fill="currentColor" stroke="none" /><path stroke="#fff" strokeWidth="1.500" d="M8 14V8.500M5.800 6.500a2.200 2.200 0 0 1 4.400 0" /></Svg></span>
      </div>
    </div>
  );
}

function Watermark() {
  return (
    <div className="pointer-events-none absolute right-[11px] bottom-1.5 flex items-start opacity-75">
      <svg width="42" height="42" viewBox="0 0 44 42" aria-hidden="true">
        <defs>
          <linearGradient id="wmBlue" x1="0" y1="1" x2="1" y2="0"><stop offset="0" stopColor="#1f5fae" /><stop offset="1" stopColor="#39c0ee" /></linearGradient>
          <linearGradient id="wmGreen" x1="0" y1="1" x2="1" y2="0"><stop offset="0" stopColor="#f0e22a" /><stop offset="1" stopColor="#22a34a" /></linearGradient>
        </defs>
        <path d="M43 1C24-1 4 10 1 23c-1 6 3 9 9 8-4-3-3-7 0-11C18 9 30 4 43 1z" fill="url(#wmBlue)" />
        <path d="M10 31c2-9 9-16 20-16-8 3-14 9-17 16z" fill="#2a7cc9" />
        <path d="M29 15c8-2 14 3 11 11-3 9-17 16-36 14 12-2 22-7 26-13 4-5 4-10-1-12z" fill="url(#wmGreen)" />
      </svg>
      <div className="flex flex-col gap-1.5 pl-px font-bold whitespace-nowrap">
        <span className="text-[21px] leading-6 text-[#3f83c8]">极光下载站</span>
        <span className="font-['Liberation_Sans'] text-base leading-4 text-[#3db664]">www.xz7.com</span>
      </div>
    </div>
  );
}

export default function App() {
  return (
    <div className="relative flex h-screen flex-col overflow-hidden bg-[linear-gradient(100deg,#e6eaee_0%,#e5e9ed_50%,#e4e5ea_85%)] font-['Noto_Sans','Noto_Sans_CJK_SC',sans-serif] text-xs">
      <TitleBar />
      <MenuBar />
      <Ribbon />
      <div className="flex min-h-0 flex-1">
        <main className="flex min-w-0 flex-1 flex-col">
          <FormulaBar />
          <div className="flex min-h-0 flex-1">
            <Grid />
            <VScroll />
          </div>
          <SheetTabs />
        </main>
        <PivotPanel />
        <SideBar />
      </div>
      <StatusBar />
      <div className="flex h-[7px] shrink-0 bg-[#1f3440]">
        <div className="ml-[38%] h-full w-[160px] bg-[#4d6068]" />
      </div>
      <ImeBar />
      <Watermark />
    </div>
  );
}
